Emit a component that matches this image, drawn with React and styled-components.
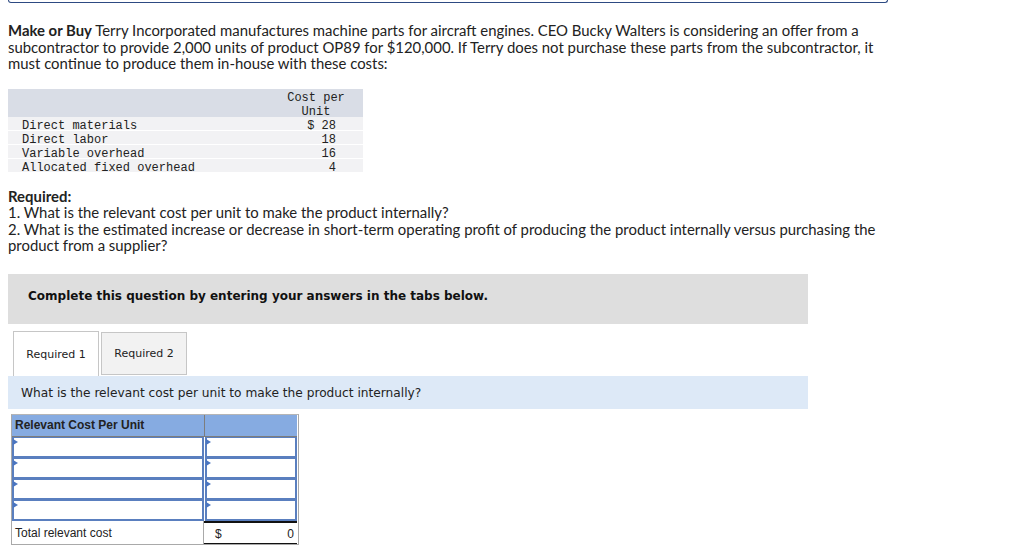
import React from "react";
import styled, { createGlobalStyle } from "styled-components";

const GlobalStyle = createGlobalStyle`
  html, body {
    margin: 0;
    padding: 0;
    background: #fff;
  }
  body {
    padding: 0 8px;
    font-family: "Lato", "Liberation Sans", sans-serif;
    color: #222;
  }
`;

const costs = [
  { label: "Direct materials", value: "$ 28" },
  { label: "Direct labor", value: "18" },
  { label: "Variable overhead", value: "16" },
  { label: "Allocated fixed overhead", value: "4" },
];

export default function App() {
  return (
    <Page>
      <GlobalStyle />
      <FrameEdge />
      <Intro>
        <strong>Make or Buy</strong> Terry Incorporated manufactures machine parts for aircraft engines. CEO Bucky
        Walters is considering an offer from a subcontractor to provide 2,000 units of product OP89 for $120,000. If
        Terry does not purchase these parts from the subcontractor, it must continue to produce them in-house with
        these costs:
      </Intro>

      <CostTable>
        <CostHead>
          <span />
          <HeadCell>
            Cost per
            <br />
            Unit
          </HeadCell>
        </CostHead>
        {costs.map((c) => (
          <CostRow key={c.label}>
            <LabelCell>{c.label}</LabelCell>
            <ValueCell>{c.value}</ValueCell>
          </CostRow>
        ))}
      </CostTable>

      <Required>
        <strong>Required:</strong>
        <br />
        1. What is the relevant cost per unit to make the product internally?
        <br />
        2. What is the estimated increase or decrease in short-term operating profit of producing the product
        internally versus purchasing the product from a supplier?
      </Required>

      <Instruction>Complete this question by entering your answers in the tabs below.</Instruction>

      <Tabs>
        <Tab $active>Required 1</Tab>
        <Tab>Required 2</Tab>
      </Tabs>
      <QuestionBar>What is the relevant cost per unit to make the product internally?</QuestionBar>

      <AnswerTable>
        <HeaderCell>Relevant Cost Per Unit</HeaderCell>
        <HeaderCell />
        {[0, 1, 2, 3].map((i) => (
          <React.Fragment key={i}>
            <InputCell />
            <InputCell />
          </React.Fragment>
        ))}
        <TotalLabel>Total relevant cost</TotalLabel>
        <TotalValue>
          <span>$</span>
          <span>0</span>
        </TotalValue>
      </AnswerTable>
    </Page>
  );
}

const Page = styled.div`
  width: 1008px;
`;

const FrameEdge = styled.div`
  width: 878px;
  height: 2px;
  border: 1px solid #2d4a82;
  border-top: none;
  border-radius: 0 0 7px 7px;
`;

const Intro = styled.p`
  width: 880px;
  margin: 19px 0 0;
  font-size: 14.9px;
  line-height: 16.6px;

  strong {
    font-weight: 700;
  }
`;

const CostTable = styled.div`
  width: 355px;
  margin-top: 17px;
  font-family: "Liberation Mono", monospace;
  font-size: 12px;
  color: #222;
`;

const CostHead = styled.div`
  display: grid;
  grid-template-columns: 1fr 94px;
  background: #d9dde6;
  height: 28px;
  padding-top: 2px;
  box-sizing: border-box;
  line-height: 14px;
`;

const HeadCell = styled.div`
  text-align: center;
`;

const CostRow = styled.div`
  display: grid;
  grid-template-columns: 1fr 94px;
  box-sizing: border-box;
  height: 14px;
  padding-top: 2px;
  line-height: 14px;
  background: #f2f2f4;
  border-bottom: 1px solid #fff;
`;

const LabelCell = styled.div`
  padding-left: 14px;
`;

const ValueCell = styled.div`
  text-align: right;
  padding-right: 27px;
`;

const Required = styled.p`
  margin: 15px 0 0;
  width: 880px;
  font-size: 14.9px;
  line-height: 16.4px;
`;

const Instruction = styled.div`
  margin-top: 21px;
  width: 800px;
  height: 50px;
  box-sizing: border-box;
  padding: 15px 0 0 20px;
  line-height: 14px;
  background: #dedede;
  font-family: "DejaVu Sans", Verdana, sans-serif;
  font-weight: bold;
  font-size: 12px;
  color: #111;
`;

const Tabs = styled.div`
  display: flex;
  gap: 2px;
  margin: 7px 0 0 5px;
  align-items: flex-end;
`;

const Tab = styled.div`
  width: 86px;
  height: ${(p) => (p.$active ? "45px" : "43px")};
  margin-bottom: ${(p) => (p.$active ? "0" : "1px")};
  box-sizing: border-box;
  display: flex;
  align-items: center;
  justify-content: center;
  border: 1px solid #c6c6c6;
  border-bottom: ${(p) => (p.$active ? "none" : "1px solid #c6c6c6")};
  background: ${(p) => (p.$active ? "#fff" : "#f2f2f2")};
  font-family: "DejaVu Sans", Verdana, sans-serif;
  font-size: 11px;
  color: #222;
`;

const QuestionBar = styled.div`
  width: 787px;
  height: 32px;
  padding: 1px 0 0 13px;
  box-sizing: content-box;
  display: flex;
  align-items: center;
  background: #dde9f7;
  font-family: "DejaVu Sans", Verdana, sans-serif;
  font-size: 12.2px;
  color: #222;
`;

const AnswerTable = styled.div`
  display: grid;
  grid-template-columns: 192px 93px;
  width: 286px;
  margin: 5px 0 0 3px;
  border: 1px solid #a9a9a9;
  border-top: 1px solid #b5b5b5;
  font-family: "Liberation Sans", Arial, sans-serif;
  font-size: 12px;
  color: #222;
`;

const HeaderCell = styled.div`
  height: 22px;
  box-sizing: border-box;
  padding: 3px 3px 0;
  background: #86abe1;
  border-bottom: 1px solid #7d7d7d;
  font-weight: bold;
  & + & {
    border-left: 1px solid #7d7d7d;
  }
`;

const InputCell = styled.div`
  position: relative;
  height: 21px;
  box-sizing: border-box;
  background: #fff;
  border: 2px solid #5a7fbf;
  border-top-width: 1px;
  &:nth-child(even) {
    margin-left: 1px;
  }
  &::before {
    content: "";
    position: absolute;
    left: -1px;
    top: 1px;
    border-left: 5px solid #4a75c0;
    border-top: 3px solid transparent;
    border-bottom: 3px solid transparent;
  }
`;

const TotalLabel = styled.div`
  height: 23px;
  box-sizing: border-box;
  padding: 5px 3px 0;
  border-right: 1px solid #a9a9a9;
`;

const TotalValue = styled.div`
  height: 23px;
  box-sizing: border-box;
  display: flex;
  justify-content: space-between;
  padding: 4px 3px 0 11px;
  border-top: 2px solid #111;
  border-bottom: 1px solid #111;
`;
